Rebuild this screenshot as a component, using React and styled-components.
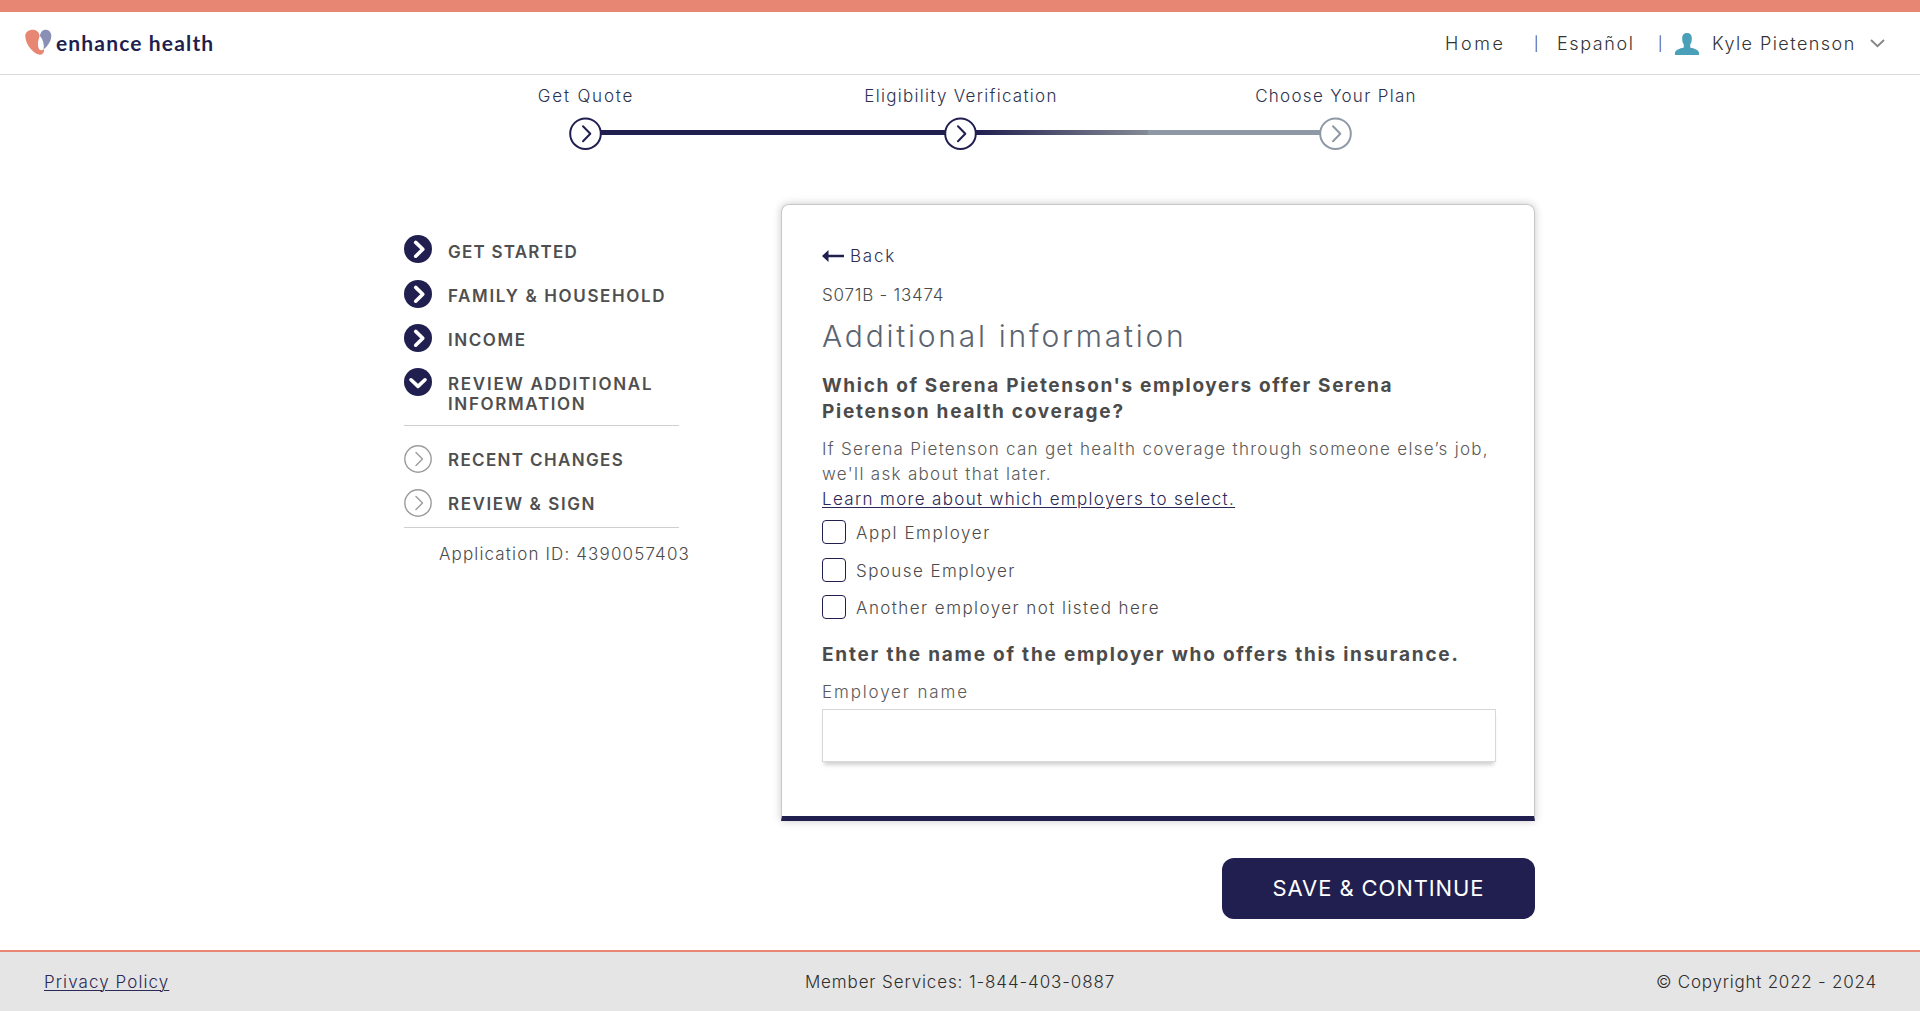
import React from 'react';
import styled, { createGlobalStyle } from 'styled-components';

const navy = '#211f4f';
const coral = '#e78672';
const slate = '#8e99a5';

const GlobalStyle = createGlobalStyle`
  *, *::before, *::after { box-sizing: border-box; }
  body {
    margin: 0;
    background: #fff;
    color: #4b4b4b;
    font: 300 17px/20px Inter, "Liberation Sans", sans-serif;
  }
`;

const Page = styled.div`
  display: flex;
  flex-direction: column;
  min-height: 100vh;
`;

const Spaced = styled.span`
  letter-spacing: ${(p) => p.$ls}px;
  white-space: nowrap;
`;

const Header = styled.header`
  display: flex;
  align-items: center;
  justify-content: space-between;
  height: 75px;
  padding: 0 35px 0 25px;
  border-top: 12px solid ${coral};
  border-bottom: 1px solid #d9d9d9;
`;

const Brand = styled.div`
  display: flex;
  align-items: flex-start;
  gap: 4px;
  color: ${navy};
  font: 700 21px/28px Lato, sans-serif;
  svg { flex: none; }
`;

const Nav = styled.nav`
  display: flex;
  align-items: center;
  padding-top: 1px;
  color: #333;
  font-size: 18px;
`;

const NavLink = styled.a`
  width: ${(p) => p.$width}px;
  letter-spacing: ${(p) => p.$ls}px;
  white-space: nowrap;
`;

const Divider = styled.span`
  width: ${(p) => p.$width}px;
  padding-top: 1px;
  font-size: 14px;
`;

const UserIcon = styled.svg`
  margin-right: 13px;
`;

const Stepper = styled.section`
  display: flex;
  flex-direction: column;
  align-items: center;
  padding-top: 11px;
`;

const StepLabels = styled.div`
  display: grid;
  grid-template-columns: repeat(3, 375px);
  padding-left: 2px;
  text-align: center;
  color: #2b3350;
`;

const StepTrack = styled.div`
  display: flex;
  align-items: flex-start;
  width: 783px;
  margin-top: 11px;
`;

const Connector = styled.div`
  flex: 1;
  height: 5px;
  margin: 13px -1px 0;
  background: ${(p) =>
    p.$partial
      ? `linear-gradient(to right, ${navy}, #858b95 50%, ${slate} 50%)`
      : navy};
`;

const Main = styled.main`
  display: flex;
  justify-content: space-between;
  width: 1131px;
  margin: 54px auto 0 404px;
`;

const Sidebar = styled.aside`
  width: 275px;
  padding-top: 32px;
`;

const NavList = styled.ul`
  display: flex;
  flex-direction: column;
  gap: 16px;
  margin: 0;
  padding: ${(p) => p.$top}px 0 ${(p) => p.$bottom}px;
  list-style: none;
  border-bottom: 1px solid #cfcfcf;
`;

const NavItem = styled.li`
  display: grid;
  grid-template-columns: 28px 1fr;
  column-gap: 16px;
  font-weight: 600;
  color: #4f4f4f;
`;

const NavText = styled.div`
  display: flex;
  flex-direction: column;
  padding-top: ${(p) => (p.$done ? 6 : 5)}px;
`;

const ApplicationId = styled.div`
  padding: 16px 0 0 35px;
`;

const Content = styled.div`
  width: 754px;
  display: flex;
  flex-direction: column;
  align-items: flex-end;
`;

const Card = styled.section`
  width: 100%;
  height: 617px;
  padding: 41px 38px 54px 40px;
  border: 1px solid #c8c8c8;
  border-bottom: 5px solid ${navy};
  border-radius: 8px 8px 0 0;
  box-shadow: 0 0 8px rgba(0, 0, 0, 0.22);
`;

const BackLink = styled.a`
  display: flex;
  align-items: center;
  gap: 6px;
  color: #2f2d55;
`;

const Code = styled.div`
  margin-top: 19px;
`;

const Title = styled.h1`
  margin: 12px 0 0;
  font-weight: 300;
  font-size: 30px;
  line-height: 38px;
  color: #5b6370;
`;

const Question = styled.h2`
  display: flex;
  flex-direction: column;
  margin: ${(p) => p.$top}px 0 0;
  font-weight: 700;
  font-size: 19px;
  line-height: 26px;
  color: #4b4b4b;
`;

const Help = styled.p`
  display: flex;
  flex-direction: column;
  align-items: flex-start;
  margin: 12px 0 0;
  line-height: 25px;
  color: #5a5a5a;
`;

const HelpLink = styled.a`
  color: #2b2956;
  letter-spacing: ${(p) => p.$ls}px;
  text-decoration: underline;
  text-decoration-thickness: 1px;
  text-underline-offset: 2px;
`;

const Options = styled.div`
  display: flex;
  flex-direction: column;
  gap: 13.5px;
  margin-top: 8px;
`;

const Option = styled.label`
  display: flex;
  gap: 10px;
  height: 24px;
  line-height: 26px;
`;

const Checkbox = styled.input`
  appearance: none;
  width: 24px;
  height: 24px;
  margin: 0;
  border: 1px solid ${navy};
  border-radius: 4px;
  background: #fff;
`;

const Field = styled.label`
  display: flex;
  flex-direction: column;
  gap: 7px;
  margin-top: 14px;
  color: #5a5a5a;
`;

const TextInput = styled.input`
  width: 100%;
  height: 53px;
  padding: 0 12px;
  border: 1px solid #d8d8d8;
  border-radius: 0;
  box-shadow: 0 5px 4px -2px rgba(0, 0, 0, 0.18);
  font: inherit;
`;

const SaveButton = styled.button`
  width: 313px;
  height: 61px;
  margin-top: 37px;
  padding: 0;
  border: 0;
  border-radius: 12px;
  background: ${navy};
  color: #fff;
  font: 400 22px/61px Inter, sans-serif;
`;

const Footer = styled.footer`
  display: grid;
  grid-template-columns: 1fr auto 1fr;
  align-items: center;
  height: 61px;
  margin-top: auto;
  padding: 0 43px;
  border-top: 2px solid ${coral};
  background: #e5e5e5;
  color: #2e2e2e;
`;

const FooterLink = styled(HelpLink)`
  justify-self: start;
  margin-left: 1px;
`;

const Copyright = styled(Spaced)`
  justify-self: end;
`;

function Logo() {
  return (
    <svg width="27" height="26" viewBox="75 88 81 78">
      <path fill={coral} d="M76 112C74 97 87 90 98 90C110 90 117 97 119 109C114 122 112 134 116 146C118 153 128 153 132 148C134 157 128 165 119 165C100 162 78 137 76 112Z" />
      <path fill="#8a90b5" d="M120 109C121 96 129 90 137 90C147 90 154 98 154 108C154 123 144 138 131 149C133 132 129 119 120 109Z" />
    </svg>
  );
}

function StepCircle({ color }) {
  return (
    <svg width="33" height="33" viewBox="0 0 33 33" fill="none" stroke={color} strokeWidth="2">
      <circle cx="16.5" cy="16.7" r="15.3" fill="#fff" />
      <path d="M14 9.3L21.3 16.7L14 24.2" strokeLinecap="round" strokeLinejoin="round" />
    </svg>
  );
}

const DoneIcon = styled.svg`
  margin: ${(p) => (p.$raised ? '-1px 0 1px' : '0')};
`;

function SectionIcon({ state, raised }) {
  if (state === 'todo') {
    return (
      <svg width="28" height="28" viewBox="0 0 28 28" fill="none" stroke="#9b9b9b" strokeWidth="1.4">
        <circle cx="14" cy="14" r="13.2" />
        <path d="M12 7.5L18.5 14L12 20.5" strokeLinecap="round" strokeLinejoin="round" />
      </svg>
    );
  }
  return (
    <DoneIcon $raised={raised} width="28" height="28" viewBox="0 0 28 28" fill="none">
      <circle cx="14" cy="14" r="14" fill={navy} />
      <path
        d={state === 'open' ? 'M7 11.8L14 18.4L21 11.8' : 'M11.7 7.4L18.8 14.3L11.7 21.2'}
        stroke="#fff"
        strokeWidth="3.6"
        strokeLinecap="round"
        strokeLinejoin="round"
      />
    </DoneIcon>
  );
}

const started = [
  { state: 'done', raised: true, lines: [['GET STARTED', 1.22]] },
  { state: 'done', lines: [['FAMILY & HOUSEHOLD', 1.63]] },
  { state: 'done', lines: [['INCOME', 1.55]] },
  { state: 'open', lines: [['REVIEW ADDITIONAL', 1.73], ['INFORMATION', 1.65]] },
];

const upcoming = [
  { state: 'todo', lines: [['RECENT CHANGES', 1.35]] },
  { state: 'todo', lines: [['REVIEW & SIGN', 1.6]] },
];

const employers = [
  ['Appl Employer', 1.55],
  ['Spouse Employer', 1.43],
  ['Another employer not listed here', 1.44],
];

function SectionList({ items, top, bottom }) {
  return (
    <NavList $top={top} $bottom={bottom}>
      {items.map((item) => (
        <NavItem key={item.lines[0][0]}>
          <SectionIcon state={item.state} raised={item.raised} />
          <NavText $done={item.state !== 'todo'}>
            {item.lines.map(([text, ls]) => (
              <Spaced key={text} $ls={ls}>{text}</Spaced>
            ))}
          </NavText>
        </NavItem>
      ))}
    </NavList>
  );
}

export default function App() {
  return (
    <Page>
      <GlobalStyle />
      <Header>
        <Brand>
          <Logo />
          <Spaced $ls={1.15}>enhance health</Spaced>
        </Brand>
        <Nav>
          <NavLink $width={89} $ls={2.6}>Home</NavLink>
          <Divider $width={23}>|</Divider>
          <NavLink $width={101} $ls={1.6}>Español</NavLink>
          <Divider $width={17}>|</Divider>
          <UserIcon width="24" height="22" viewBox="0 0 24 22">
            <path fill="#4a9fb9" d="M12 0C15.6 0 17 2.4 16.8 6C16.7 8.8 16 10.4 15.2 11.5V14.5C19.5 15.6 24 16.8 24 20V22H0V20C0 16.8 4.5 15.6 8.8 14.5V11.5C8 10.4 7.3 8.8 7.2 6C7 2.4 8.4 0 12 0Z" />
          </UserIcon>
          <NavLink $width={158} $ls={1.45}>Kyle Pietenson</NavLink>
          <svg width="15" height="9" viewBox="0 0 15 9" fill="none">
            <path d="M1 1L7.5 7.3L14 1" stroke="#858585" strokeWidth="1.9" />
          </svg>
        </Nav>
      </Header>

      <Stepper>
        <StepLabels>
          <Spaced $ls={1.8}>Get Quote</Spaced>
          <Spaced $ls={1.28}>Eligibility Verification</Spaced>
          <Spaced $ls={1.3}>Choose Your Plan</Spaced>
        </StepLabels>
        <StepTrack>
          <StepCircle color={navy} />
          <Connector />
          <StepCircle color={navy} />
          <Connector $partial />
          <StepCircle color={slate} />
        </StepTrack>
      </Stepper>

      <Main>
        <Sidebar>
          <SectionList items={started} top={0} bottom={11} />
          <SectionList items={upcoming} top={19} bottom={10} />
          <ApplicationId>
            <Spaced $ls={1.14}>Application ID: 4390057403</Spaced>
          </ApplicationId>
        </Sidebar>

        <Content>
          <Card>
            <BackLink>
              <svg width="22" height="12" viewBox="0 0 22 12" fill={navy}>
                <path d="M0 6L6.5 0V4.7H22V7.3H6.5V12Z" />
              </svg>
              <Spaced $ls={1.75}>Back</Spaced>
            </BackLink>
            <Code><Spaced $ls={0.76}>S071B - 13474</Spaced></Code>
            <Title><Spaced $ls={2.76}>Additional information</Spaced></Title>
            <Question $top={18}>
              <Spaced $ls={1.66}>Which of Serena Pietenson's employers offer Serena</Spaced>
              <Spaced $ls={1.73}>Pietenson health coverage?</Spaced>
            </Question>
            <Help>
              <Spaced $ls={1.28}>If Serena Pietenson can get health coverage through someone else’s job,</Spaced>
              <Spaced $ls={1.31}>we'll ask about that later.</Spaced>
              <HelpLink $ls={1.33}>Learn more about which employers to select.</HelpLink>
            </Help>
            <Options>
              {employers.map(([name, ls]) => (
                <Option key={name}>
                  <Checkbox type="checkbox" />
                  <Spaced $ls={ls}>{name}</Spaced>
                </Option>
              ))}
            </Options>
            <Question $top={23}>
              <Spaced $ls={1.78}>Enter the name of the employer who offers this insurance.</Spaced>
            </Question>
            <Field>
              <Spaced $ls={1.85}>Employer name</Spaced>
              <TextInput type="text" />
            </Field>
          </Card>
          <SaveButton><Spaced $ls={0.9}>SAVE &amp; CONTINUE</Spaced></SaveButton>
        </Content>
      </Main>

      <Footer>
        <FooterLink $ls={1.08}>Privacy Policy</FooterLink>
        <Spaced $ls={0.88}>Member Services: 1-844-403-0887</Spaced>
        <Copyright $ls={0.77}>© Copyright 2022 - 2024</Copyright>
      </Footer>
    </Page>
  );
}
